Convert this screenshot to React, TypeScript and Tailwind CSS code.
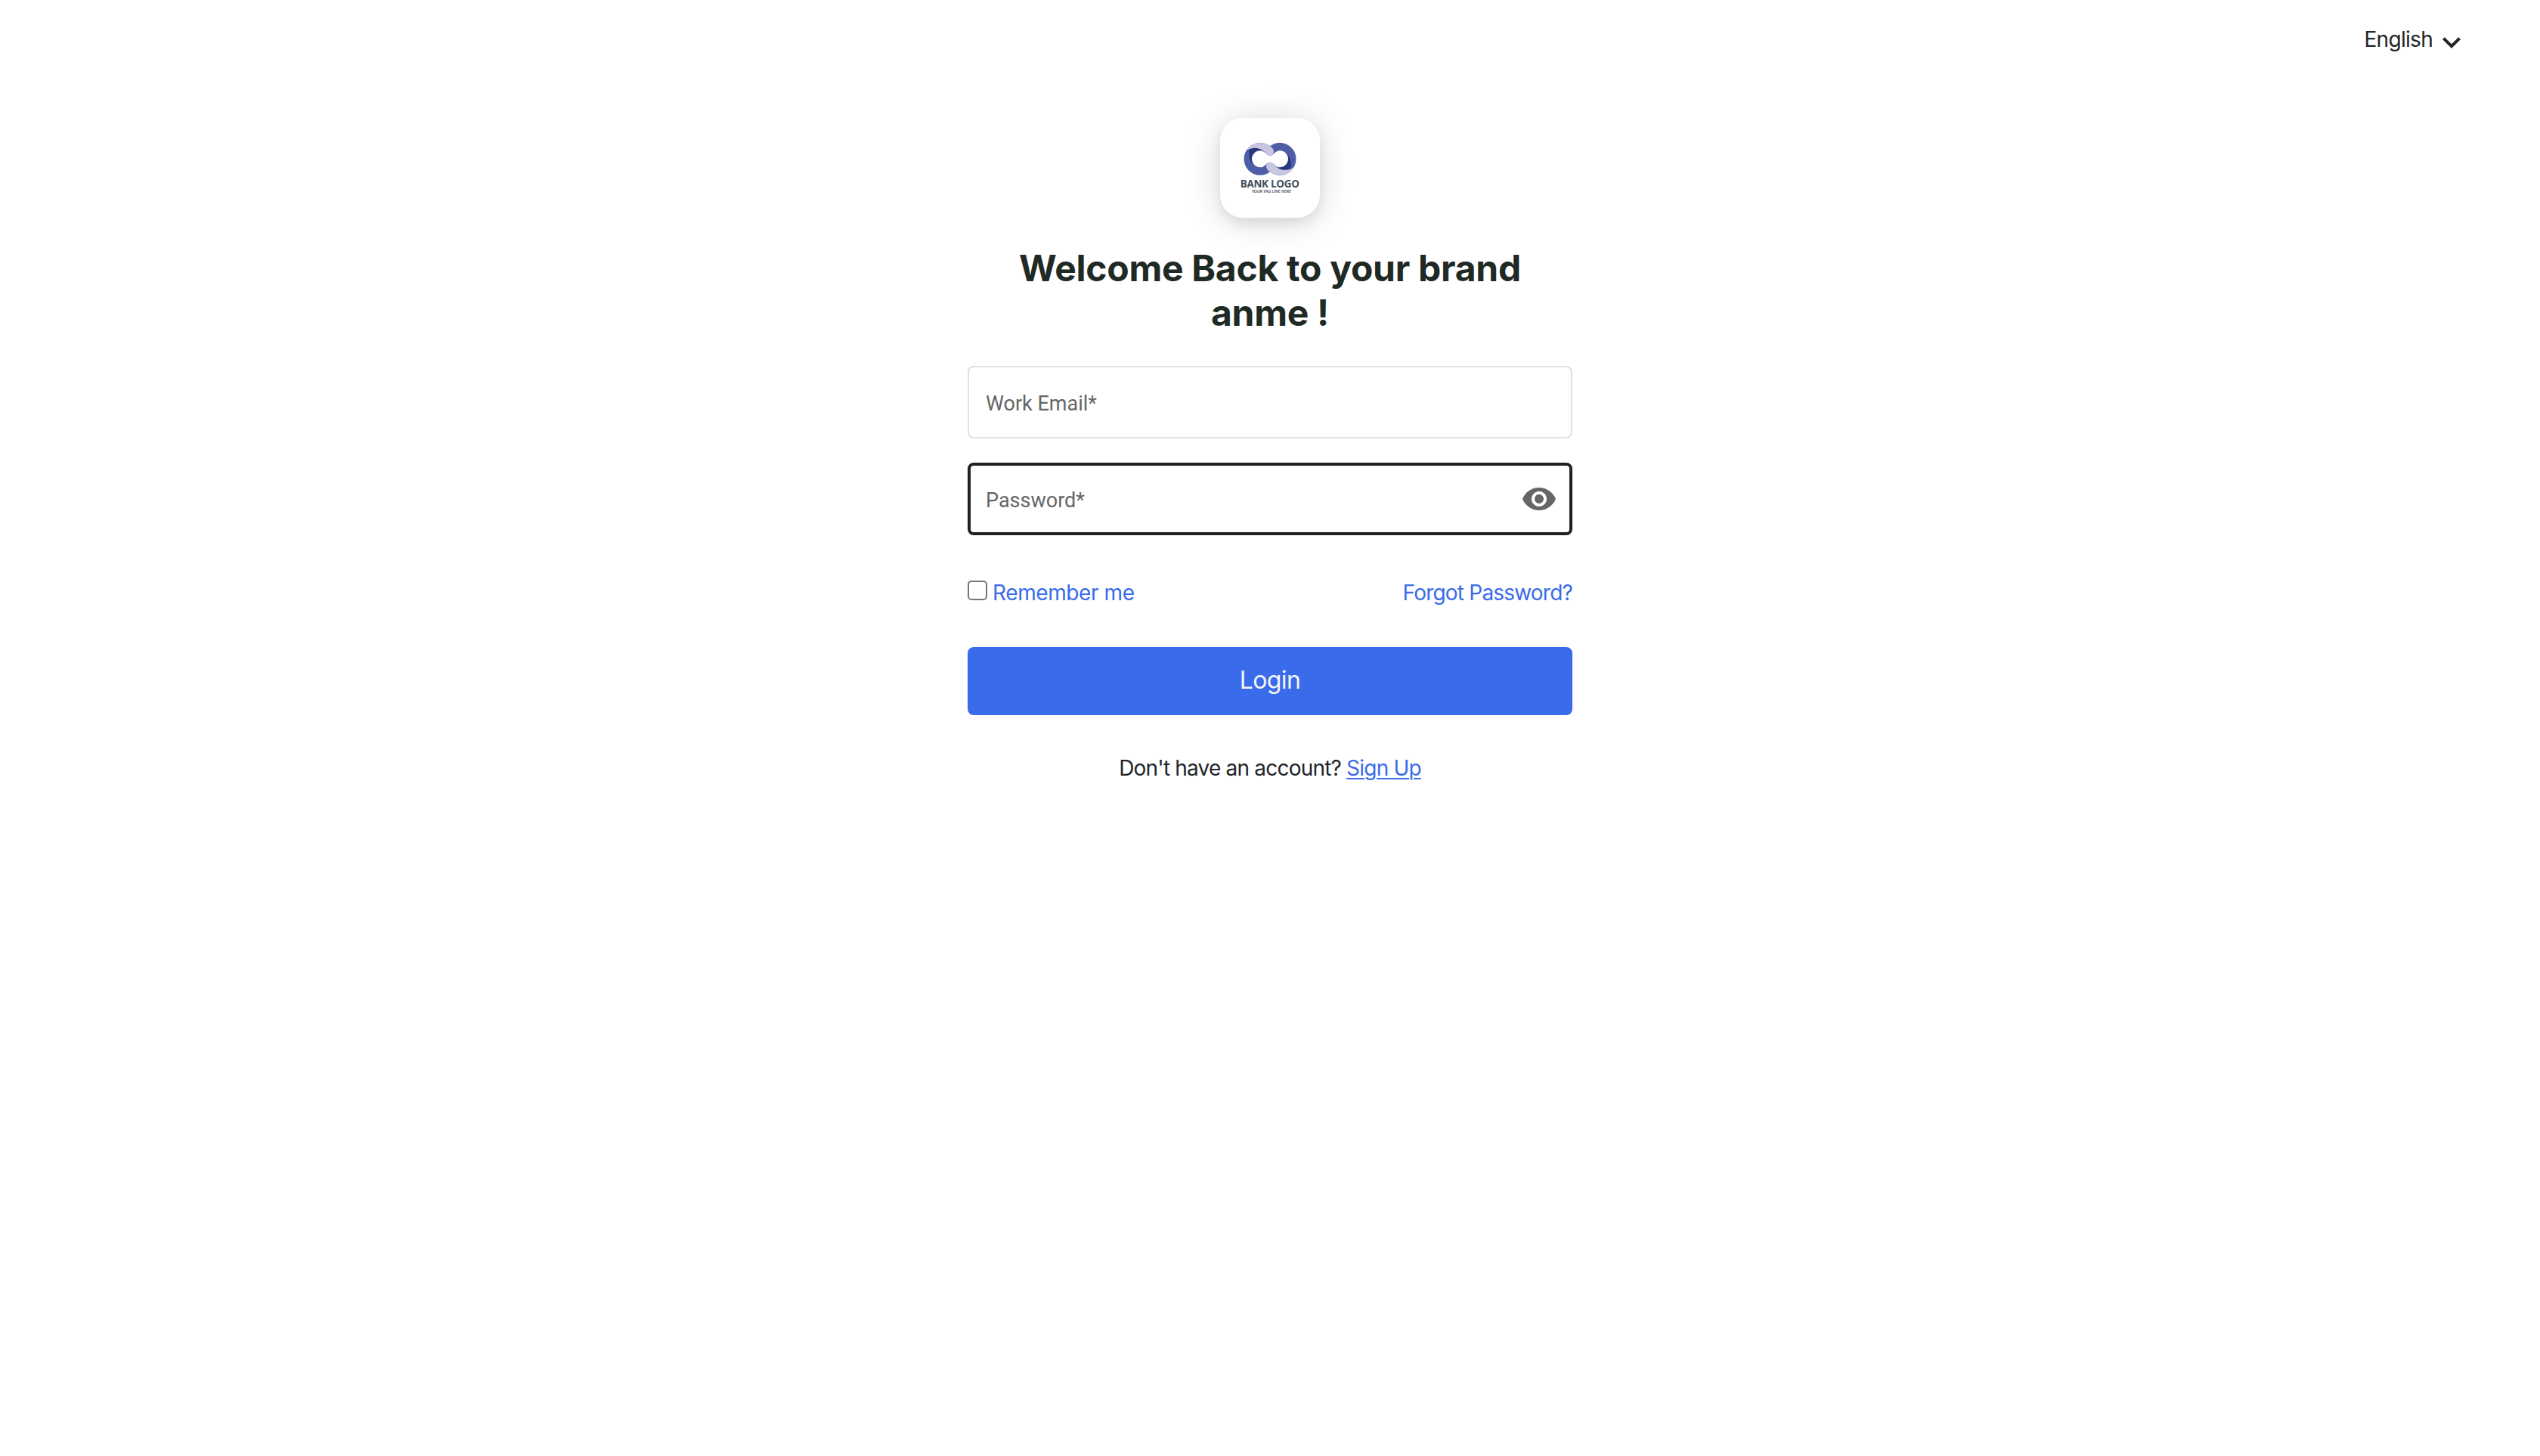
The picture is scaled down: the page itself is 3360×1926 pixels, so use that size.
import { useState } from "react";

const BankLogo = () => (
  <svg viewBox="0 0 396 396" className="w-full h-full">
    <g transform="translate(-72 -78)">
      <circle cx="231" cy="241" r="64.5" fill="#4d5ea6" />
      <circle cx="309" cy="241" r="64.5" fill="#4d5ea6" />
      <path
        d="M188 204C206 190 232 194 252 214L236 226L214 262L203 263C186 243 184 224 188 204Z"
        fill="#27387f"
      />
      <path
        d="M352 278C334 292 308 288 288 268L304 256L326 220L337 219C354 239 356 258 352 278Z"
        fill="#27387f"
      />
      <path
        d="M231 208C250 208 256 228 270 228C284 228 290 208 309 208A33 33 0 0 1 309 274C290 274 284 254 270 254C256 254 250 274 231 274A33 33 0 0 1 231 208Z"
        fill="#fff"
      />
      <path
        d="M177 206C189 187 208 177 231 177C252 177 266 184 278 196C285 203 287 213 283 220C278 229 265 231 257 222C241 203 217 187 177 206Z"
        fill="#c9c6e1"
      />
      <path
        d="M363 276C351 295 332 305 309 305C288 305 274 298 262 286C255 279 253 269 257 262C262 253 275 251 283 260C299 279 323 295 363 276Z"
        fill="#c9c6e1"
      />
      <text
        x="152"
        y="353"
        textLength="234"
        lengthAdjust="spacingAndGlyphs"
        className="font-['Open_Sans',sans-serif] font-bold text-[43px]"
        fill="#414e5b"
      >
        BANK LOGO
      </text>
      <text
        x="197"
        y="374"
        textLength="156"
        lengthAdjust="spacingAndGlyphs"
        className="font-['Open_Sans',sans-serif] font-semibold italic text-[18px]"
        fill="#414e5b"
      >
        YOUR TAG LINE HERE
      </text>
    </g>
  </svg>
);

const EyeIcon = () => (
  <svg viewBox="0 0 24 24" className="size-12" fill="#666666">
    <path d="M12 4.5C7 4.5 2.73 7.61 1 12c1.73 4.39 6 7.5 11 7.5s9.27-3.11 11-7.5c-1.73-4.39-6-7.5-11-7.5zM12 17c-2.76 0-5-2.24-5-5s2.24-5 5-5 5 2.24 5 5-2.24 5-5 5zm0-8c-1.66 0-3 1.34-3 3s1.34 3 3 3 3-1.34 3-3-1.34-3-3-3z" />
  </svg>
);

export default function App() {
  const [showPassword, setShowPassword] = useState(false);

  return (
    <div className="min-h-[1926px] bg-white font-['Inter',sans-serif] text-[28px] leading-[42px] tracking-[-0.8px] text-[#212529]">
      <header className="flex justify-end h-[156px] pt-8 pr-[93px]">
        <button className="flex items-start h-12 cursor-pointer">
          <span className="-mt-px mr-px tracking-[-0.7px]">English</span>
          <svg viewBox="0 0 24 24" className="size-12" fill="#212529">
            <path d="M16.59 8.59 12 13.17 7.41 8.59 6 10l6 6 6-6z" />
          </svg>
        </button>
      </header>

      <main className="w-[800px] mx-auto flex flex-col">
        <div className="size-[132px] mx-auto rounded-[30px] bg-white shadow-[0_4px_48px_rgba(0,0,0,0.15),0_8px_16px_rgba(0,0,0,0.08)]">
          <BankLogo />
        </div>

        <h1 className="mt-[37px] w-[720px] mx-auto text-center text-5xl leading-[59px] font-bold tracking-[-0.27px] text-[#1f2a24]">
          Welcome Back to your brand
          <br />
          anme !
        </h1>

        <form className="flex flex-col" onSubmit={(e) => e.preventDefault()}>
          <input
            type="text"
            placeholder="Work Email*"
            className="mt-[41px] h-24 pt-[3px] px-[22px] border-2 border-[#e0e0e0] rounded-lg font-['Roboto',sans-serif] text-[27px] tracking-normal placeholder:text-[#666666] outline-none"
          />
          <div className="mt-8 h-24 pl-5 pr-4 flex items-center border-4 border-[#212121] rounded-lg">
            <input
              type={showPassword ? "text" : "password"}
              placeholder="Password*"
              className="flex-1 pt-[3px] font-['Roboto',sans-serif] text-[27px] tracking-normal placeholder:text-[#666666] outline-none"
            />
            <button
              type="button"
              className="cursor-pointer"
              onClick={() => setShowPassword(!showPassword)}
            >
              <EyeIcon />
            </button>
          </div>

          <div className="mt-[55px] h-[42px] flex justify-between text-[#3a6bea]">
            <label className="flex gap-[7px]">
              <input
                type="checkbox"
                className="appearance-none mt-[5px] size-[26px] border-2 border-[#767676] rounded-[5px]"
              />
              <span className="tracking-[-0.4px]">Remember me</span>
            </label>
            <a href="#">Forgot Password?</a>
          </div>

          <button
            type="submit"
            className="mt-[51px] h-[90px] pb-[2px] rounded-lg bg-[#3a6bea] text-[32px] tracking-[-0.6px] text-[#f5f5f5] cursor-pointer"
          >
            Login
          </button>
        </form>

        <p className="mt-[49px] text-center">
          Don't have an account?{" "}
          <a
            href="#"
            className="underline decoration-2 underline-offset-[3px] text-[#3a6bea]"
          >
            Sign Up
          </a>
        </p>
      </main>
    </div>
  );
}
